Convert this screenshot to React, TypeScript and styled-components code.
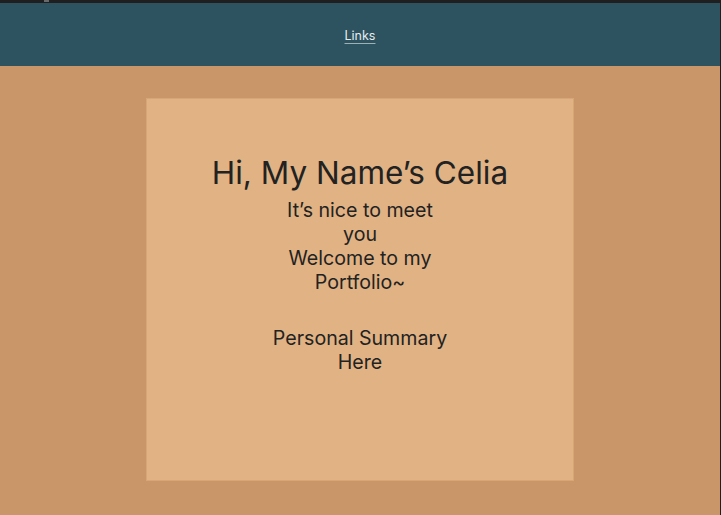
import React from "react";
import styled, { createGlobalStyle } from "styled-components";

const Global = createGlobalStyle`
  html, body { margin: 0; padding: 0; background: #1f1f1f; }
  body { font-family: Inter, "Noto Sans", sans-serif; }
  #root { min-height: 515px; }
`;

const Frame = styled.div`
  display: flex;
  flex-direction: column;
  width: 720px;
  height: 515px;
  border-right: 1px solid #1f1f1f;
  background: #c89668;
  overflow: hidden;
`;

const TopStrip = styled.div`
  height: 3px;
  background: #1f1f1f;
  display: flex;
  padding-left: 44px;
`;

const Mark = styled.span`
  width: 5px;
  height: 2px;
  background: #6a6a6a;
`;

const Header = styled.header`
  height: 63px;
  background: #2e5360;
  display: flex;
  justify-content: center;
  align-items: flex-start;
  padding-top: 25px;
  box-sizing: border-box;
`;

const NavLink = styled.a`
  font-size: 12.5px;
  color: #e6ecee;
  text-decoration: underline;
  text-decoration-color: #9fb0b5;
  text-underline-offset: 3px;
  text-decoration-thickness: 1px;
  cursor: pointer;
`;

const Main = styled.main`
  flex: 1;
  display: flex;
  justify-content: center;
  padding-top: 32px;
`;

const Card = styled.section`
  width: 428px;
  height: 383px;
  box-sizing: border-box;
  background: #e1b283;
  border: 1px solid #d7a677;
  display: flex;
  flex-direction: column;
  align-items: center;
  padding-top: 54px;
  color: #222222;
`;

const Title = styled.h1`
  margin: 0;
  font-size: 31.5px;
  line-height: 39px;
  font-weight: 400;
`;

const Body = styled.div`
  width: 180px;
  margin-top: 6px;
  display: flex;
  flex-direction: column;
  gap: 32px;
`;

const Para = styled.p`
  margin: 0;
  font-size: 19.6px;
  line-height: 24px;
  text-align: center;
`;

export default function App() {
  return (
    <>
      <Global />
      <Frame>
        <TopStrip>
          <Mark />
        </TopStrip>
        <Header>
          <NavLink>Links</NavLink>
        </Header>
        <Main>
          <Card>
            <Title>Hi, My Name’s Celia</Title>
            <Body>
              <Para>
                It’s nice to meet you
                <br />
                Welcome to my Portfolio~
              </Para>
              <Para>Personal Summary Here</Para>
            </Body>
          </Card>
        </Main>
      </Frame>
    </>
  );
}
